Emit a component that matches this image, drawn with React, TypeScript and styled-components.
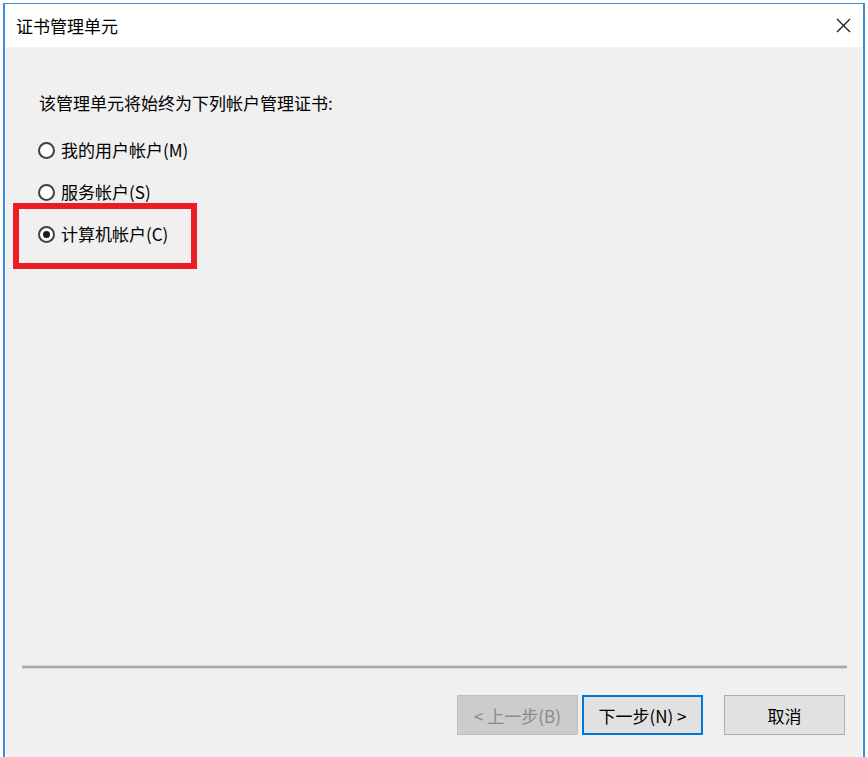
import React from "react";
import styled, { createGlobalStyle } from "styled-components";

const Global = createGlobalStyle`
  html, body { margin: 0; padding: 0; background: #ffffff; }
  body { font-family: "Noto Sans CJK SC", "Noto Sans", sans-serif; }
`;

const Page = styled.div`
  width: 868px;
  height: 757px;
  padding: 3px 0 0 3px;
  box-sizing: border-box;
  overflow: hidden;
  background: #ffffff;
`;

const Dialog = styled.div`
  width: 862px;
  height: 754px;
  box-sizing: border-box;
  border-top: 1px solid #3a8ddc;
  border-left: 2px solid #3a8ddc;
  border-right: 2px solid #3a8ddc;
  background: #ffffff;
  display: flex;
  flex-direction: column;
`;

const TitleBar = styled.div`
  height: 43px;
  flex: none;
  display: flex;
  align-items: center;
  justify-content: space-between;
  padding-left: 11px;
  background: #ffffff;
`;

const Title = styled.div`
  font-size: 17px;
  line-height: 24px;
  color: #000;
  margin-top: 1px;
`;

const CloseButton = styled.div`
  width: 40px;
  height: 43px;
  display: flex;
  align-items: center;
  justify-content: center;
`;

const Body = styled.div`
  position: relative;
  flex: 1;
  margin: 0 1px;
  background: #f0f0f0;
  display: flex;
  flex-direction: column;
`;

const Content = styled.div`
  padding: 44px 0 0 33px;
  display: flex;
  flex-direction: column;
`;

const Prompt = styled.div`
  font-size: 17px;
  line-height: 24px;
  color: #000;
`;

const RadioList = styled.div`
  margin-top: 14px;
  display: flex;
  flex-direction: column;
`;

const RadioRow = styled.div`
  height: 42px;
  display: flex;
  align-items: center;
  gap: 6px;
  font-size: 17px;
  line-height: 24px;
  color: #000;
`;

const RadioCircle = styled.span<{ $checked?: boolean }>`
  flex: none;
  width: 17px;
  height: 17px;
  margin-left: -1px;
  margin-top: 1px;
  box-sizing: border-box;
  border-radius: 50%;
  border: 2px solid #404040;
  background: #ffffff;
  display: flex;
  align-items: center;
  justify-content: center;
  &::after {
    content: "";
    width: 7px;
    height: 7px;
    border-radius: 50%;
    background: ${(p) => (p.$checked ? "#1a1a1a" : "transparent")};
  }
`;

const Highlight = styled.div`
  position: absolute;
  left: 7px;
  top: 156px;
  width: 184px;
  height: 66px;
  box-sizing: border-box;
  border: 6px solid #ec1c24;
  pointer-events: none;
`;

const Spacer = styled.div`
  flex: 1;
`;

const Separator = styled.div`
  height: 2px;
  margin: 0 15px 0 16px;
  background: #a8a8a8;
  box-shadow: 0 -1px 0 #d6d6d6, 0 1px 0 #dcdcdc;
`;

const ButtonRow = styled.div`
  margin-top: 27px;
  padding: 0 17px 22px 0;
  display: flex;
  justify-content: flex-end;
`;

type Variant = "disabled" | "default" | "normal";

const Button = styled.div<{ $variant: Variant; $gap?: number }>`
  width: 121px;
  height: 40px;
  box-sizing: border-box;
  margin-left: ${(p) => p.$gap ?? 0}px;
  display: flex;
  align-items: center;
  justify-content: center;
  font-size: 17px;
  color: ${(p) => (p.$variant === "disabled" ? "#8a8a8a" : "#000")};
  background: ${(p) => (p.$variant === "disabled" ? "#cccccc" : "#e1e1e1")};
  border: ${(p) =>
    p.$variant === "disabled"
      ? "1px solid #bfbfbf"
      : p.$variant === "default"
      ? "2px solid #0078d7"
      : "1px solid #adadad"};
  white-space: pre;
`;

export default function App() {
  return (
    <>
      <Global />
      <Page>
        <Dialog>
          <TitleBar>
            <Title>证书管理单元</Title>
            <CloseButton>
              <svg width="15" height="15" viewBox="0 0 15 15">
                <path d="M1 1 L14 14 M14 1 L1 14" stroke="#1a1a1a" strokeWidth="1.3" fill="none" />
              </svg>
            </CloseButton>
          </TitleBar>
          <Body>
            <Content>
              <Prompt>该管理单元将始终为下列帐户管理证书:</Prompt>
              <RadioList>
                <RadioRow>
                  <RadioCircle />
                  我的用户帐户(M)
                </RadioRow>
                <RadioRow>
                  <RadioCircle />
                  服务帐户(S)
                </RadioRow>
                <RadioRow>
                  <RadioCircle $checked />
                  计算机帐户(C)
                </RadioRow>
              </RadioList>
            </Content>
            <Highlight />
            <Spacer />
            <Separator />
            <ButtonRow>
              <Button $variant="disabled">{"< 上一步(B)"}</Button>
              <Button $variant="default" $gap={4}>{"下一步(N) >"}</Button>
              <Button $variant="normal" $gap={21}>取消</Button>
            </ButtonRow>
          </Body>
        </Dialog>
      </Page>
    </>
  );
}
